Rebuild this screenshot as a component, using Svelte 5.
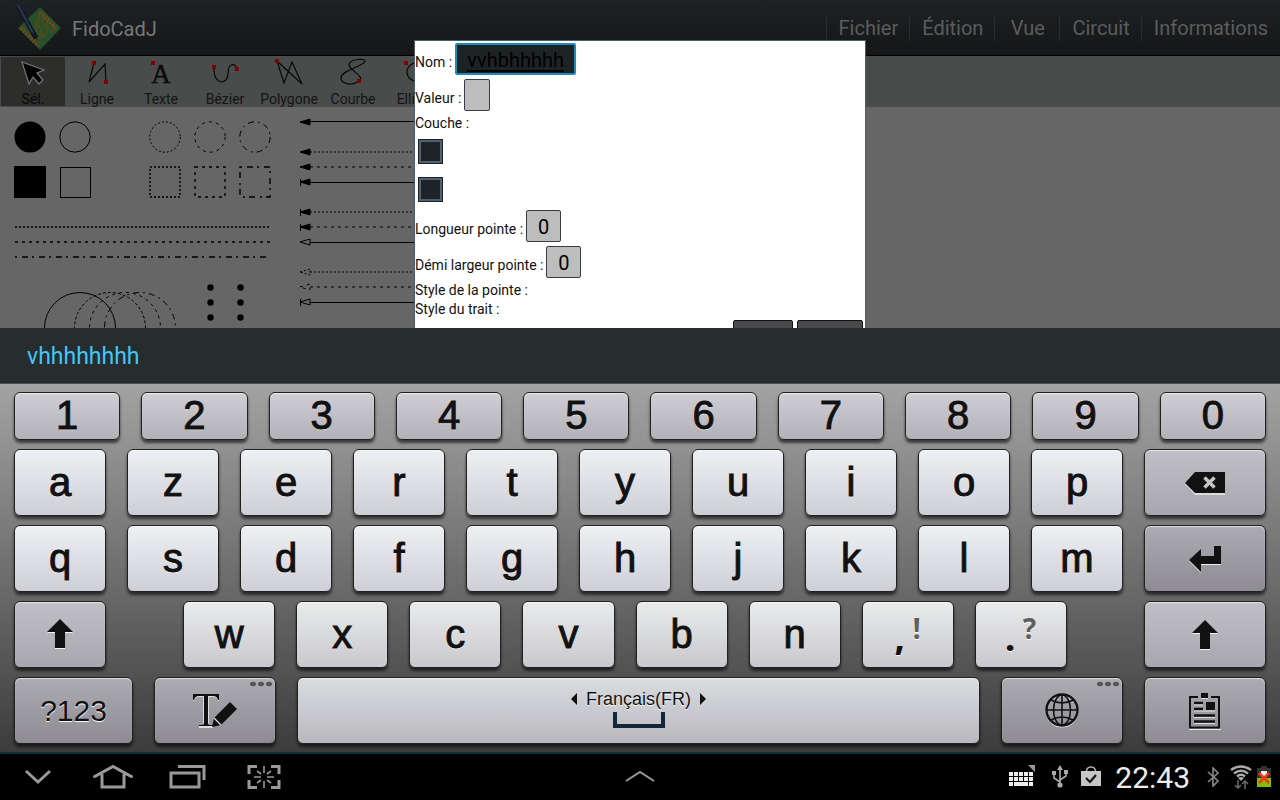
<script>
  const menus = ['Fichier', 'Édition', 'Vue', 'Circuit', 'Informations'];
  const tools = ['Sél.', 'Ligne', 'Texte', 'Bézier', 'Polygone', 'Courbe', 'Ellipse'];
  const digits = ['1', '2', '3', '4', '5', '6', '7', '8', '9', '0'];
  const rowA = ['a', 'z', 'e', 'r', 't', 'y', 'u', 'i', 'o', 'p'];
  const rowQ = ['q', 's', 'd', 'f', 'g', 'h', 'j', 'k', 'l', 'm'];
  const rowW = ['w', 'x', 'c', 'v', 'b', 'n'];

  const dot = '2 2';
  const dash = '3 4';
  const dashDot = '2 5 6 4';
  const arrows = [
    { y: 122, kind: 'full', line: '' },
    { y: 152, kind: 'full', line: dot },
    { y: 167, kind: 'full', line: dash },
    { y: 182, kind: 'full', bar: true, line: '' },
    { y: 212, kind: 'full', bar: true, line: dot },
    { y: 227, kind: 'full', bar: true, line: dash },
    { y: 242, kind: 'open', line: '' },
    { y: 272, kind: 'open', line: dot },
    { y: 287, kind: 'open', line: dash },
    { y: 302, kind: 'open', bar: true, line: '' }
  ];

  let name = $state('vvhbhhhhh');
  let value = $state('');
  let arrowLength = $state('0');
  let arrowWidth = $state('0');
</script>

<div class="screen">
  <section class="app">
    <header>
      <svg class="logo" width="48" height="48" viewBox="0 0 48 48" aria-hidden="true">
        <path d="M26 3 47 24 26 46 4 24Z" fill="#25502b" />
        <path d="M25 9v9l-3 4v5l4 4v8M29 12v9l4 3v5l-5 5M33 17v6l5 4M22 15v5l5 5v5l3 3M37 20l3 5-4 4" fill="none" stroke="#59491a" stroke-width="1.3" />
        <path d="M26 8 42 24" stroke="#7a4716" stroke-width="4" stroke-dasharray="2 1.5" />
        <path d="M7 24 25 42" stroke="#7a4716" stroke-width="4" stroke-dasharray="2 1.5" />
        <path d="M4 2 22 34" stroke="#101722" stroke-width="5" />
        <path d="M4 1 20 31" stroke="#28374f" stroke-width="2" />
        <path d="M18 30l5 6-1-8z" fill="#101722" />
      </svg>
      <h1>FidoCadJ</h1>
      <nav>
        {#each menus as menu}
          <button>{menu}</button>
        {/each}
      </nav>
    </header>

    <div class="toolbar">
      {#each tools as tool, i}
        <button class="tool" class:active={i === 0}>
          <svg width="64" height="33" viewBox="0 0 64 33" fill="none" stroke="#080808" stroke-width="1.2" aria-hidden="true">
            {#if i === 0}
              <path d="M21 5 43 13 36 16 42 23 38 27 32 20 28 27Z" fill="#000" stroke="#777" stroke-width="1.2" />
            {:else if i === 1}
              <path d="M29 6 24 25 40 7 41 24" />
              <path class="pin" d="M27 4h4v4h-4zM39 23h4v4h-4z" />
            {:else if i === 2}
              <text x="32" y="26" text-anchor="middle">A</text>
              <path class="pin" d="M22 4h4v4h-4z" />
            {:else if i === 3}
              <path d="M21 10C20 29 35 28 35 17C35 5 42 6 44 12" />
              <path class="pin" d="M19 8h4v4h-4zM42 10h4v4h-4z" />
            {:else if i === 4}
              <path d="M20 4 45 27 35 5 27 26Z" />
              <path class="pin" d="M18 2h4v4h-4z" />
            {:else if i === 5}
              <path d="M38 24C30 30 20 26 20 21C20 13 44 9 44 4C44 1 30 2 28 7C27 13 43 18 39 24" />
              <path class="pin" d="M36 22h4v4h-4z" />
            {:else}
              <ellipse cx="34" cy="15" rx="12" ry="10" />
              <path class="pin" d="M19 4h4v4h-4z" />
            {/if}
          </svg>
          <span>{tool}</span>
        </button>
      {/each}
    </div>

    <div class="canvas">
      <svg width="1280" height="221" viewBox="0 107 1280 221" fill="none" stroke="#000" aria-hidden="true">
        <circle cx="30" cy="137" r="15.5" fill="#000" stroke="none" />
        <circle cx="75" cy="137" r="15.2" />
        <circle cx="165" cy="137" r="15.2" stroke-dasharray={dot} />
        <circle cx="210" cy="137" r="15.2" stroke-dasharray={dash} />
        <circle cx="255" cy="137" r="15.2" stroke-dasharray="6 4 2 4" />
        <rect x="14" y="166" width="32" height="32" fill="#000" stroke="none" />
        <rect x="60.5" y="167.5" width="30" height="30" />
        <rect x="150" y="167" width="30" height="30" stroke-width="1.4" stroke-dasharray={dot} />
        <rect x="195" y="167" width="30" height="30" stroke-width="1.4" stroke-dasharray={dash} />
        <rect x="240" y="167" width="30" height="30" stroke-width="1.4" stroke-dasharray={dashDot} />
        <g stroke-width="1.4">
          <path d="M15 227H270" stroke-dasharray={dot} />
          <path d="M15 242H270" stroke-dasharray={dash} />
          <path d="M15 257H270" stroke-dasharray={dashDot} />
        </g>
        <circle cx="80" cy="328" r="35.5" />
        <circle cx="110" cy="328" r="35.5" stroke-dasharray="3 2" />
        <circle cx="125" cy="328" r="35.5" stroke-dasharray={dash} />
        <circle cx="140" cy="328" r="35.5" stroke-dasharray="6 4 2 4" />
        {#each [287.5, 302.5, 317.5] as y}
          <circle cx="210.5" cy={y} r="3.2" fill="#000" stroke="none" />
          <circle cx="240.5" cy={y} r="3.2" fill="#000" stroke="none" />
        {/each}
        {#each arrows as a}
          <path d={`M310 ${a.line ? a.y : a.y - (a.y === 122 ? 0.5 : -0.5)}H640`} stroke-dasharray={a.line || 'none'} />
          <path d={`M300 ${a.y}l10-3v6z`} fill={a.kind === 'full' ? '#000' : 'none'} stroke-dasharray={a.kind === 'open' && a.line ? a.line : 'none'} />
          {#if a.bar}<path d={`M300.5 ${a.y - 3}v7`} />{/if}
        {/each}
      </svg>
    </div>

    <form class="dialog">
      <div class="field">
        <label for="nom">Nom :</label>
        <input id="nom" class="name" bind:value={name} />
      </div>
      <div class="field">
        <label for="valeur">Valeur :</label>
        <input id="valeur" class="value" bind:value={value} />
      </div>
      <div class="line" id="couche">Couche :</div>
      <div class="swatch"><button type="button" aria-labelledby="couche"></button></div>
      <div class="swatch"><button type="button" aria-labelledby="couche"></button></div>
      <div class="field">
        <label for="longueur">Longueur pointe :</label>
        <input id="longueur" class="number" bind:value={arrowLength} />
      </div>
      <div class="field">
        <label for="largeur">Démi largeur pointe :</label>
        <input id="largeur" class="number" bind:value={arrowWidth} />
      </div>
      <div class="line">Style de la pointe :</div>
      <div class="line">Style du trait :</div>
      <div class="actions">
        <button type="button" class="ok" aria-label="OK"></button>
        <button type="button" class="cancel" aria-label="Annuler"></button>
      </div>
    </form>
  </section>

  <div class="suggestions"><button>vhhhhhhhh</button></div>

  <section class="keyboard">
    <div class="row digits">
      {#each digits as d}<button class="key digit">{d}</button>{/each}
    </div>
    <div class="row">
      {#each rowA as k}<button class="key">{k}</button>{/each}
      <button class="key wide mid" aria-label="Effacer">
        <svg width="40" height="24" viewBox="0 0 40 24">
          <path d="M0 13 10 3H40V24H10Z" fill="#ddd" />
          <path d="M0 12 10 1H40V22H10Z" fill="#111" />
          <path d="M19.5 6.5l10 10m0-10l-10 10" stroke="#c4c3c8" stroke-width="3.5" />
        </svg>
      </button>
    </div>
    <div class="row">
      {#each rowQ as k}<button class="key">{k}</button>{/each}
      <button class="key wide dark" aria-label="Entrée">
        <svg width="32" height="28" viewBox="0 0 32 28">
          <path d="M0 16 12 5V12H25V2H32V20H12V28Z" fill="#eee" />
          <path d="M0 15 12 4V11H25V1H32V19H12V27Z" fill="#111" />
        </svg>
      </button>
    </div>
    <div class="row">
      <button class="key mid" aria-label="Maj">
        <svg width="26" height="30" viewBox="0 0 26 30">
          <path d="M13 1 26 14H18V30H8V14H0Z" fill="#f4f4f4" />
          <path d="M13 0 26 13H18V29H8V13H0Z" fill="#111" />
        </svg>
      </button>
      <span class="gap"></span>
      {#each rowW as k}<button class="key low">{k}</button>{/each}
      <button class="key low punct"><b>,</b><i>!</i></button>
      <button class="key low punct"><b>.</b><i>?</i></button>
      <span class="gap"></span>
      <button class="key wide mid" aria-label="Maj">
        <svg width="26" height="30" viewBox="0 0 26 30">
          <path d="M13 1 26 14H18V30H8V14H0Z" fill="#f4f4f4" />
          <path d="M13 0 26 13H18V29H8V13H0Z" fill="#111" />
        </svg>
      </button>
    </div>
    <div class="row">
      <button class="key symbols dark">?123</button>
      <button class="key wide dark more" aria-label="Saisie">
        <svg width="44" height="34" viewBox="0 0 44 34">
          <path d="M0 1H26V7H25C24 4 23 3 20 3H16V29C16 31 17 32 20 32V34H6V32C9 32 10 31 10 29V3H6C3 3 2 4 1 7H0Z" fill="#ddd" />
          <path d="M0 0H26V6H25C24 3 23 2 20 2H15V29C15 31 17 31 20 31V32H6V31C9 31 11 31 11 29V2H6C3 2 2 3 1 6H0Z" fill="#111" />
          <path d="M37 8 44 15 28 31 19 33 21 24Z" fill="#111" />
          <path d="M21 24 28 31" stroke="#ddd" stroke-width="1.3" />
        </svg>
        <svg class="dots" width="24" height="6" viewBox="0 0 24 6">
          <g fill="#555"><ellipse cx="4" cy="3" rx="3" ry="2.2" /><ellipse cx="12" cy="3" rx="3" ry="2.2" /><ellipse cx="20" cy="3" rx="3" ry="2.2" /></g>
        </svg>
      </button>
      <button class="key space">
        <span class="lang">
          <svg width="6" height="12" viewBox="0 0 6 12"><path d="M6 0V12L0 6Z" fill="#111" /></svg>
          Français(FR)
          <svg width="6" height="12" viewBox="0 0 6 12"><path d="M0 0V12L6 6Z" fill="#111" /></svg>
        </span>
        <span class="bracket"></span>
      </button>
      <button class="key wide dark more" aria-label="Langue">
        <svg width="34" height="36" viewBox="0 0 34 36" fill="none">
          <circle cx="17" cy="18" r="15.5" stroke="#ddd" stroke-width="2" />
          <g stroke="#111" stroke-width="1.6">
            <circle cx="17" cy="17" r="15.5" stroke-width="2.4" />
            <ellipse cx="17" cy="17" rx="8.5" ry="15" />
            <path d="M17 2V32M2 17H32M6 7Q17 13 28 7M6 27Q17 21 28 27" />
          </g>
        </svg>
        <svg class="dots" width="24" height="6" viewBox="0 0 24 6">
          <g fill="#555"><ellipse cx="4" cy="3" rx="3" ry="2.2" /><ellipse cx="12" cy="3" rx="3" ry="2.2" /><ellipse cx="20" cy="3" rx="3" ry="2.2" /></g>
        </svg>
      </button>
      <button class="key wide dark" aria-label="Presse-papiers">
        <svg width="32" height="38" viewBox="0 0 32 38" fill="none">
          <path d="M0 37.5H32" stroke="#eee" />
          <path d="M9 5H1V35.5H30V5H22" stroke="#111" stroke-width="2" />
          <path d="M12 1H19V6H12ZM17 10H26V18H17Z" fill="#111" />
          <path d="M5 11H14M5 17H14M5 23.5H26M5 29.5H26" stroke="#111" stroke-width="2.5" />
          <path d="M5 13H14M5 19H26M5 25.5H26M5 31.5H26M12 6.5h7" stroke="#ddd" />
        </svg>
      </button>
    </div>
  </section>

  <footer>
    <div class="nav">
      <button aria-label="Retour"><svg width="40" height="28" viewBox="0 0 40 28"><path d="M8 8 20 19 32 8" /></svg></button>
      <button aria-label="Accueil"><svg width="40" height="28" viewBox="0 0 40 28"><path d="M1 14.500V14L20 3.500 39 14V14.500M9 11V24H31V11" /></svg></button>
      <button aria-label="Applications"><svg width="40" height="28" viewBox="0 0 40 28"><path d="M3 10H31V24H3ZM10 3.500H36V17" /></svg></button>
      <button aria-label="Capture"><svg width="40" height="28" viewBox="0 0 40 28"><path d="M14 3.500H6V11M28 3.500H36V11M14 24.500H6V17M28 24.500H36V17" /><path d="M21 3v7M21 18v7M11 14h7M24 14h7M14 8l4 3M28 8l-4 3M14 20l4-3M28 20l-4-3" stroke-width="1.6" /></svg></button>
    </div>
    <button class="up" aria-label="Ouvrir"><svg width="32" height="14" viewBox="0 0 32 14"><path d="M2 11 16 2 30 11" stroke-width="2" /></svg></button>
    <div class="status">
      <svg width="27" height="24" viewBox="0 0 27 24">
        <path d="M19 0h7v7z" fill="#999" stroke="none" />
        <g stroke="#eee" stroke-width="4" fill="none">
          <path d="M0 9H24M0 14H24" stroke-dasharray="4 1" />
          <path d="M0 19H4M5 19H19M20 19H24" />
        </g>
      </svg>
      <svg class="usb" width="16" height="24" viewBox="0 0 16 24">
        <path d="M8 3V20M8 17 2 13V8M8 15 14 11V7" stroke="#aaa" stroke-width="1.6" />
        <path d="M8 0l3 5H5zM0 6h4v4H0zM12 5h4v4h-4z" fill="#aaa" stroke="none" />
        <circle cx="8" cy="20" r="2.6" fill="#aaa" stroke="none" />
      </svg>
      <svg class="bag" width="20" height="22" viewBox="0 0 20 22">
        <path d="M0 5H20V20H0Z" fill="#c8c5c8" stroke="none" />
        <path d="M5.500 5Q6 1 10 1T14.500 5" stroke="#aaa" stroke-width="1.5" />
        <path d="M5 12l4 4 6-7" stroke="#111" stroke-width="2.2" />
      </svg>
      <time>22:43</time>
      <svg class="bt" width="12" height="20" viewBox="0 0 12 20">
        <path d="M1 5 11 14 6 19V1L11 6 1 15" stroke="#888" stroke-width="1.6" />
      </svg>
      <svg class="wifi" width="22" height="24" viewBox="0 0 22 24">
        <path d="M1 5Q11-2 21 5M4 8.500Q11 3 18 8.500M7 11.500Q11 8 15 11.500" stroke="#aaa" stroke-width="2.4" />
        <path d="M11 16l-3-3q3-2 6 0z" fill="#aaa" stroke="none" />
        <path d="M8 15v7M5 20l3 3 3-3M15 24v-7M12 19l3-3 3 3" stroke="#666" stroke-width="1.6" />
      </svg>
      <svg width="14" height="22" viewBox="0 0 14 22">
        <path d="M4 0H10V2H14V12H0V2H4Z" fill="#333" stroke="none" />
        <path d="M0 12H14V21H0Z" fill="#7fbf00" stroke="none" />
        <path d="M4 5h6v5H4z" fill="#eee" stroke="none" />
        <path d="M2 7l10 10M12 7L2 17" stroke="#f03a17" stroke-width="2.6" />
      </svg>
    </div>
  </footer>
</div>

<style>
  :global(body) { margin: 0; background: #000; }
  * { box-sizing: border-box; }
  button, input { font: inherit; margin: 0; padding: 0; border: 0; background: none; color: inherit; }
  svg { display: block; flex: none; }

  .screen { display: flex; flex-direction: column; height: 100vh; font-family: Roboto, sans-serif; }

  .app { position: relative; flex: 1; min-height: 0; overflow: hidden; background: #666; }
  header {
    display: flex; align-items: center; height: 56px; padding-left: 14px;
    background: linear-gradient(#1d2225, #151617); border-bottom: 1px solid #000;
    color: #777; font-size: 20px;
  }
  h1 { flex: 1; margin: 0 0 0 10px; padding-top: 2px; font-size: 20px; font-weight: 400; line-height: 28px; }
  nav { display: flex; padding-top: 1px; padding-right: 1px; }
  nav button { min-width: 65px; height: 26px; padding: 1px 11px 0 12px; border-left: 1px solid #2a2c2d; color: #5b5c5c; line-height: 25px; }

  .toolbar { display: flex; height: 51px; padding: 1px 0 1px 1px; background: #484c4a; overflow: hidden; }
  .tool { display: flex; flex-direction: column; align-items: center; flex: none; width: 64px; color: #141414; font-size: 14px; line-height: 18px; }
  .tool.active { background: #2d2e2b; }
  .tool.active span { color: #0a0a0a; }
  .tool text { font: 27px "Liberation Serif", serif; fill: #0a0a0a; stroke: #0a0a0a; stroke-width: 0.5px; }
  .tool .pin { fill: #800000; stroke: none; }

  .canvas { overflow: hidden; }

  .dialog {
    position: absolute; top: 40px; left: 50%; width: 452px; transform: translateX(-50%);
    background: #fff; border: 1px solid #4d5e6b; color: #111; font-size: 14px;
  }
  .field { display: flex; align-items: center; gap: 3px; height: 36px; }
  .field label { padding-top: 6px; line-height: 18px; }
  .field input {
    height: 32px; padding-top: 2px; border: 1px solid #363c42; border-radius: 2px;
    background: #bdbdbd; color: #000; font-size: 20px; text-align: center; outline: none;
  }
  .field .name { width: 121px; border: 2px solid #1f8ab5; background: #1d2225; text-decoration: underline; text-underline-offset: 3px; }
  .field .value { width: 26px; }
  .field .number { width: 35px; }
  .line { height: 19px; line-height: 21px; }
  .swatch { display: flex; align-items: center; height: 38px; padding-left: 3px; }
  .swatch button { width: 25px; height: 25px; border: 1px solid #1b2024; background: #1d2329; box-shadow: inset 0 0 0 2px #51626e; }
  .actions { display: flex; justify-content: flex-end; gap: 4px; padding: 2px 2px 4px; }
  .actions button { height: 32px; border: 1px solid #111; border-radius: 2px; background: #4a4a4c; }
  .ok { width: 60px; }
  .cancel { width: 66px; }

  .suggestions { display: flex; align-items: center; flex: none; height: 56px; padding: 0 27px; background: #272c2f; border-bottom: 1px solid #4e5153; }
  .suggestions button { padding-top: 3px; color: #43c6f8; font-size: 23px; line-height: 28px; }

  .keyboard {
    display: flex; flex-direction: column; gap: 9px; flex: none; padding: 8px 14px;
    background: linear-gradient(#a3a3a3, #3c3c3c);
    font-family: "Liberation Sans", sans-serif;
  }
  .row { display: flex; gap: 21px; height: 67px; }
  .row.digits { height: 48px; }
  .key {
    display: flex; align-items: center; justify-content: center; position: relative;
    flex: 90 1 0; min-width: 0; padding-bottom: 2px; border: 1px solid #202020; border-radius: 6px;
    background: linear-gradient(#edf0f3, #cecfd6);
    box-shadow: 0 3px 3px rgba(0, 0, 0, .6), inset 0 1px 1px rgba(255, 255, 255, .6);
    color: #111; font-size: 40px; line-height: 40px; text-shadow: 0 1px 1px #fff;
    -webkit-text-stroke: 1px #111;
  }
  .digit { background: linear-gradient(#d0ced4, #b3b1b8); }
  .low { background: linear-gradient(#e9ebeb, #c9c8ce); }
  .mid { background: linear-gradient(#c0bfc5, #a8a7ad); }
  .dark { background: linear-gradient(#adacb2, #8e8b93); }
  .wide { flex-grow: 120; padding-bottom: 0; }
  .gap { flex: 35 1 0; }
  .symbols { flex-grow: 117; padding-bottom: 0; font-size: 30px; -webkit-text-stroke: 0; }
  .space { flex-direction: column; gap: 2px; flex-grow: 681; padding-bottom: 0; background: linear-gradient(#dadce0, #b9b8be); -webkit-text-stroke: 0; }
  .lang { display: flex; align-items: center; gap: 9px; font-size: 18px; line-height: 22px; }
  .bracket { width: 52px; height: 16px; margin-bottom: 6px; border: 4px solid #14273a; border-top: 0; }
  .punct { gap: 8px; font-family: "Noto Sans", sans-serif; font-weight: 700; -webkit-text-stroke: 0; }
  .punct b { padding-top: 10px; font-size: 32px; }
  .punct i { padding-bottom: 12px; color: #5f5f5f; font-size: 28px; font-style: normal; }
  .dots { position: absolute; top: 3px; right: 2px; }

  footer {
    display: grid; grid-template-columns: 1fr auto 1fr; align-items: center; flex: none;
    height: 48px; border-top: 2px solid #0b303e; background: #000;
  }
  footer svg { fill: none; stroke: #999; stroke-width: 3; }
  .nav { display: flex; }
  .nav button { display: flex; justify-content: center; width: 75px; }
  .status { display: flex; justify-content: flex-end; align-items: center; padding-right: 9px; }
  .usb { margin: 0 13px 0 16px; }
  .bag { margin-right: 14px; }
  time { padding-top: 1px; color: #ececec; font-size: 30px; line-height: 36px; }
  .bt { margin: 0 11px 0 17px; }
  .wifi { margin-right: 5px; }
</style>
